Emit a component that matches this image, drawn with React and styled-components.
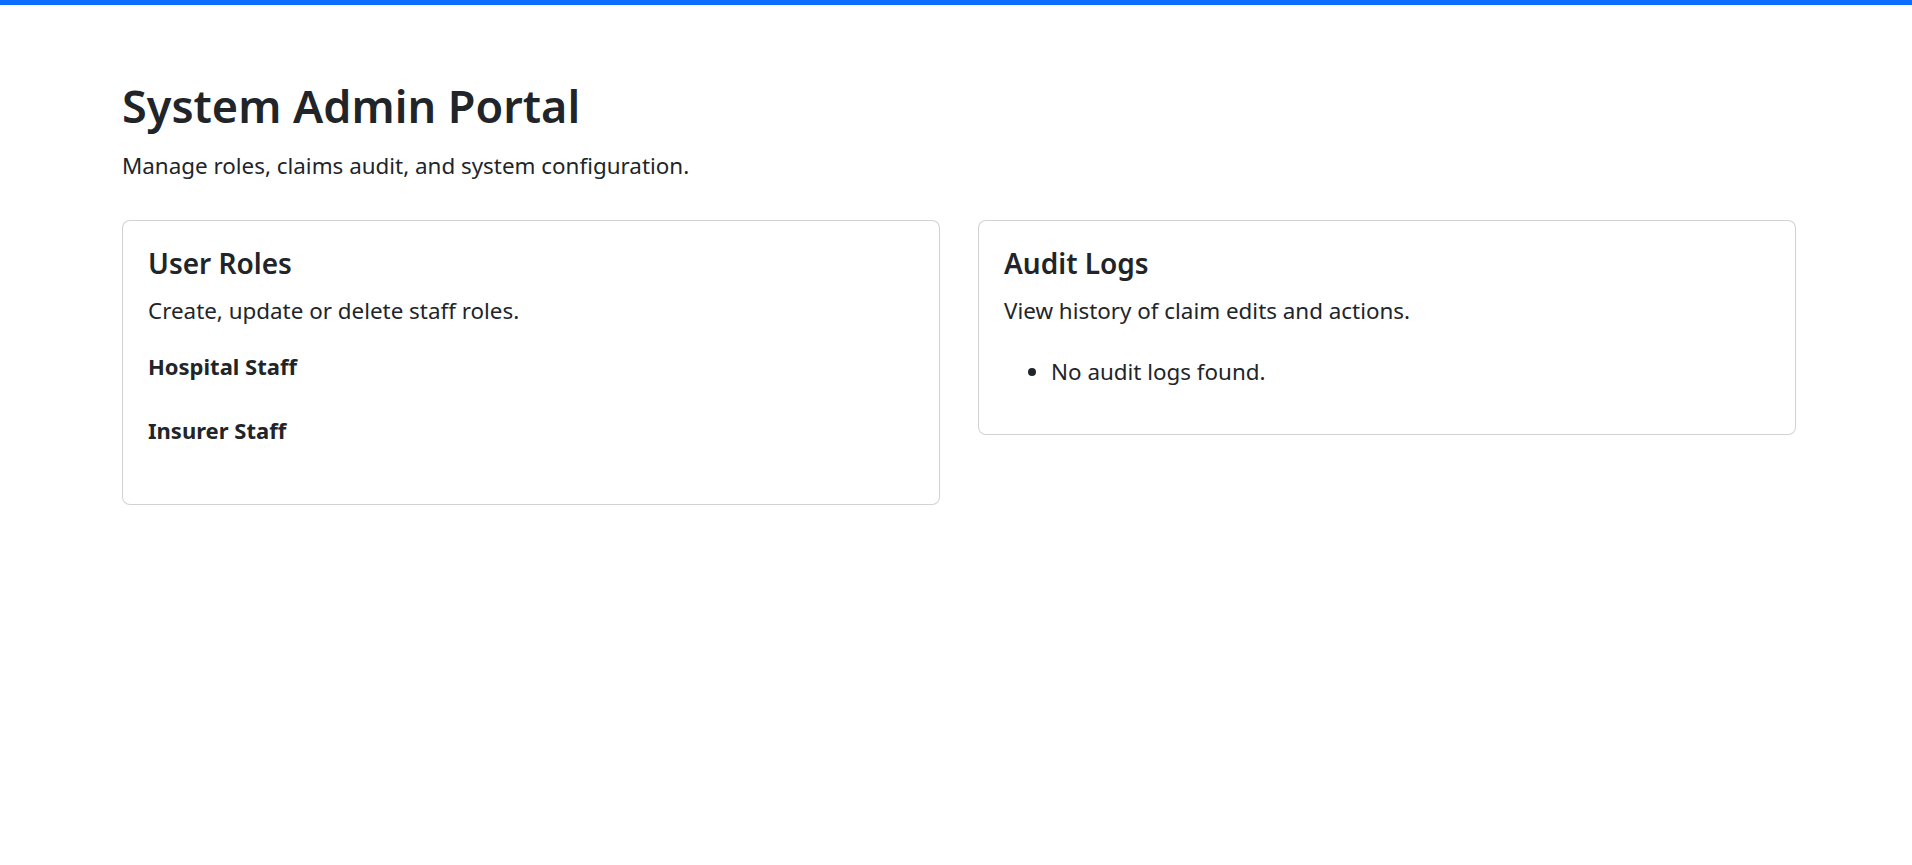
import React from "react";
import styled, { createGlobalStyle } from "styled-components";

const GlobalStyle = createGlobalStyle`
  html, body { margin: 0; padding: 0; background: #fff; }
  body {
    font-family: "Noto Sans", "Open Sans", sans-serif;
    color: #212529;
    -webkit-font-smoothing: antialiased;
  }
  * { box-sizing: border-box; }
`;

const TopBar = styled.div`
  height: 5px;
  background: #0d6efd;
`;

const Main = styled.main`
  padding: 74px 116px 40px 122px;
`;

const Title = styled.h1`
  margin: 0;
  font-size: 45px;
  line-height: 1.2;
  font-weight: 600;
`;

const Lead = styled.p`
  margin: 16px 0 37px;
  font-size: 22.4px;
  line-height: 1.5;
`;

const Grid = styled.div`
  display: grid;
  grid-template-columns: 1fr 1fr;
  gap: 38px;
  align-items: start;
`;

const Card = styled.section`
  border: 1px solid rgba(0, 0, 0, 0.175);
  border-radius: 8px;
  padding: 26px 25px 22px;
  background: #fff;
`;

const CardTitle = styled.h2`
  margin: 0 0 14px;
  font-size: 28px;
  line-height: 1.2;
  font-weight: 600;
`;

const CardText = styled.p`
  margin: 0;
  font-size: 22.4px;
  line-height: 1.5;
`;

const RoleList = styled.div`
  margin-top: 25px;
`;

const RoleName = styled.h3`
  margin: 0 0 38px;
  font-size: 22px;
  line-height: 1.2;
  font-weight: 700;
`;

const LogList = styled.ul`
  margin: 27px 0 24px;
  padding-left: 47px;
  font-size: 22.4px;
  line-height: 1.5;
`;

const roles = ["Hospital Staff", "Insurer Staff"];

export default function App() {
  return (
    <>
      <GlobalStyle />
      <TopBar />
      <Main>
        <Title>System Admin Portal</Title>
        <Lead>Manage roles, claims audit, and system configuration.</Lead>
        <Grid>
          <Card>
            <CardTitle>User Roles</CardTitle>
            <CardText>Create, update or delete staff roles.</CardText>
            <RoleList>
              {roles.map((r) => (
                <RoleName key={r}>{r}</RoleName>
              ))}
            </RoleList>
          </Card>
          <Card>
            <CardTitle>Audit Logs</CardTitle>
            <CardText>View history of claim edits and actions.</CardText>
            <LogList>
              <li>No audit logs found.</li>
            </LogList>
          </Card>
        </Grid>
      </Main>
    </>
  );
}
